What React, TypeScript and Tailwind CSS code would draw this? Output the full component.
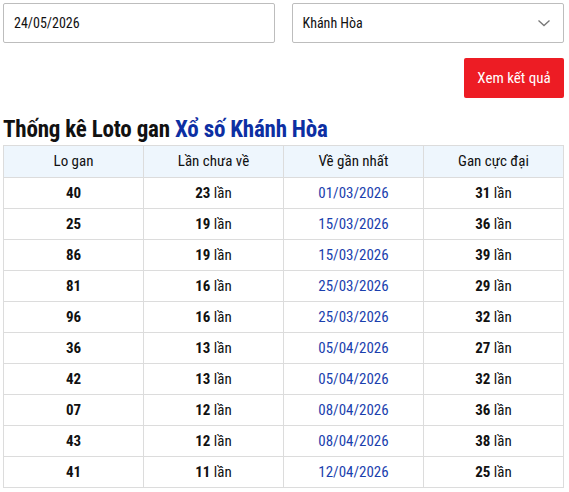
const rows = [
  ["40", "23", "01/03/2026", "31"],
  ["25", "19", "15/03/2026", "36"],
  ["86", "19", "15/03/2026", "39"],
  ["81", "16", "25/03/2026", "29"],
  ["96", "16", "25/03/2026", "32"],
  ["36", "13", "05/04/2026", "27"],
  ["42", "13", "05/04/2026", "32"],
  ["07", "12", "08/04/2026", "36"],
  ["43", "12", "08/04/2026", "38"],
  ["41", "11", "12/04/2026", "25"],
];

export default function App() {
  return (
    <div className="w-[569px] bg-white pl-[3px] pr-[5px] pt-[3px] text-[#111] font-['Roboto_Condensed','Liberation_Sans_Narrow',Roboto,sans-serif]">
      {/* Filters */}
      <div className="flex gap-[17px]">
        <div className="flex-1 h-10 border border-[#bdbdbd] rounded-[2px] flex items-center px-[10px] text-[14px]">24/05/2026</div>
        <div className="flex-1 h-10 border border-[#bdbdbd] rounded-[2px] flex items-center justify-between pl-[10px] pr-[11px] text-[14px]">
          <span>Khánh Hòa</span>
          <svg viewBox="0 0 16 16" className="w-4 h-4" fill="none" stroke="#777" strokeWidth={1.3}>
            <path d="M2.5 5.5 8 10.5l5.5-5" />
          </svg>
        </div>
      </div>

      <div className="flex justify-end mt-[15px]">
        <button className="w-[100px] h-10 bg-[#ed1c24] text-white text-[15px] rounded-[2px]">Xem kết quả</button>
      </div>

      {/* Title */}
      <h1 className="mt-[17px] text-[23px] font-bold leading-[29px] tracking-[-0.2px]">
        Thống kê Loto gan <span className="text-[#0d2fa3]">Xổ số Khánh Hòa</span>
      </h1>

      <table className="w-[561px] border-collapse table-fixed text-[15px] mt-[1px]">
        <thead>
          <tr className="bg-[#eef6fd] h-[32px]">
            {["Lo gan", "Lần chưa về", "Về gần nhất", "Gan cực đại"].map((h) => (
              <th key={h} className="border border-[#dcdcdc] font-normal">{h}</th>
            ))}
          </tr>
        </thead>
        <tbody>
          {rows.map((r, i) => (
            <tr key={i} className="h-[31px] text-center">
              <td className="border border-[#dcdcdc] font-bold">{r[0]}</td>
              <td className="border border-[#dcdcdc]"><b>{r[1]}</b> lần</td>
              <td className="border border-[#dcdcdc] text-[#1b3fae]">{r[2]}</td>
              <td className="border border-[#dcdcdc]"><b>{r[3]}</b> lần</td>
            </tr>
          ))}
        </tbody>
      </table>
    </div>
  );
}
